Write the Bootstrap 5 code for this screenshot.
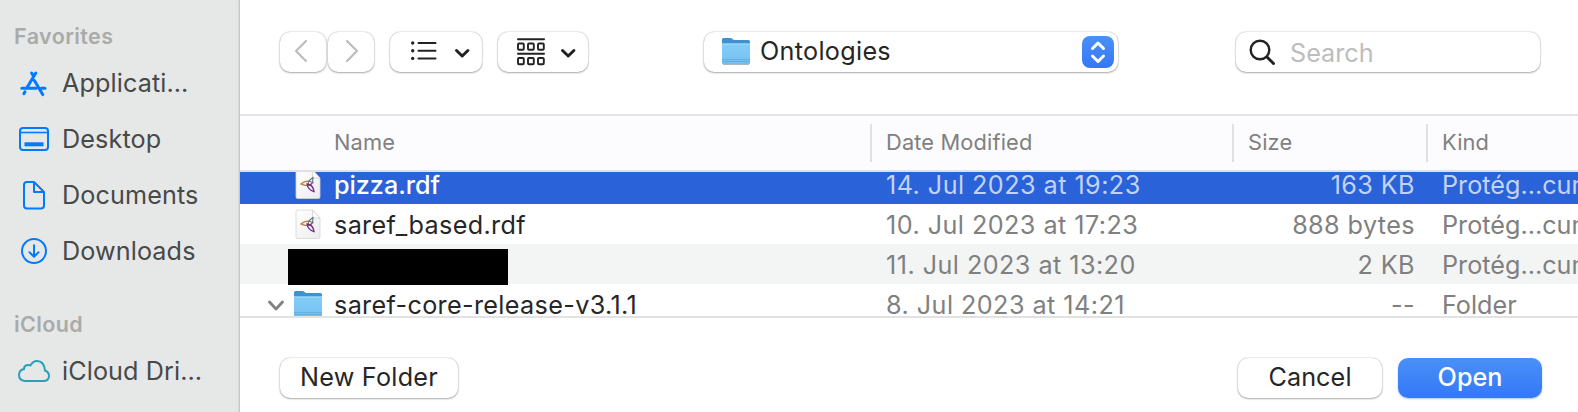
<!DOCTYPE html>
<html lang="en">
<head>
<meta charset="utf-8">
<title>Open</title>
<link href="https://cdn.jsdelivr.net/npm/bootstrap@5.3.0/dist/css/bootstrap.min.css" rel="stylesheet">
<style>
body{width:1578px;height:412px;overflow:hidden;background:#fff;font-family:Inter,"Liberation Sans",sans-serif;font-size:25.2px;color:#262626;line-height:1.2;white-space:nowrap}
.sidebar{width:240px;padding-top:17px;background:#e6e8e7;box-shadow:inset -1px 0 #c6c8c7,inset -2px 0 1px #d9dbda;color:#484949}
.side-title{height:38px;padding:1px 0 0 14px;font-size:21.5px;font-weight:600;color:#a9abaa;letter-spacing:.4px}
.side-title.second{margin-top:26px}
.side-item{height:56px;padding-left:16px;letter-spacing:.1px}
.side-item svg{width:36px;height:36px;margin-right:10px}
.toolbar{height:116px;border-bottom:2px solid #e4e4e4;padding:32px 38px 0 40px}
.ctl{height:40px;border-radius:10px;background:#fff;border:0;box-shadow:0 0 1.5px rgba(0,0,0,.35),0 1px 2px rgba(0,0,0,.28);color:#262626}
.navbtn{width:46px}
.navbtn+.navbtn{margin-left:2px}
.w-list{width:92px;margin-left:16px}
.w-grid{width:90px;margin-left:16px}
.w-path{width:414px;margin-left:116px;padding:0 4px 0 17px;letter-spacing:.3px}
.w-path>span:nth-child(2){margin:-2px 0 0 9px}
.w-search{width:304px;margin-left:118px;padding-left:12px;color:#bdbdbd}
.w-search span{margin:2px 0 0 12px}
.step{width:32px;height:32px;border-radius:8px;background:linear-gradient(#4a90f8,#3478f6)}
.cols{display:grid;grid-template-columns:630px 362px 194px 152px}
.heads{height:56px;background:#fcfcfe;border-bottom:2px solid #dfe0e2;font-size:21.8px;color:#808080;padding-bottom:2px;letter-spacing:.15px}
.heads>div{height:38px;display:flex;align-items:center;margin-top:1px}
.heads>div:first-child{padding-left:94px}
.heads>div+div{border-left:2px solid #e0e0e2;padding-left:14px}
.list{height:146px;overflow:hidden;border-bottom:2px solid #e2e2e2}
.list>.cols:first-child{margin-top:-8px}
.file{height:40px;padding-top:3px;align-items:center}
.file>div{display:flex;align-items:center;color:#808080}
.file>div:first-child{color:#262626;padding-left:26px;letter-spacing:.34px}
.file>div:nth-child(2),.file>div:nth-child(4){padding-left:16px}
.file>div:nth-child(2){letter-spacing:.45px}
.file>div:nth-child(3){justify-content:flex-end;padding-right:11px;letter-spacing:.4px}
.file.sel{background:#2962d9}
.file.sel>div{color:#c3d3f6}
.file.sel>div:first-child{color:#fff;font-weight:500;letter-spacing:-.05px}
.file.alt{background:#f3f5f5}
.twist{width:20px;margin-right:8px}
.ico{width:28px;height:32px;margin:-3px 12px 0 0}
.ico.dir{width:30px;margin:-1px 11px 0 -1px}
.redact{width:220px;height:36px;background:#000;margin:2px 0 -1px 22px}
.footer-bar{padding:40px 36px 0 40px}
.footer-bar .ctl{padding:0 0 2px}
.b-new{width:178px;letter-spacing:.25px}
.b-cancel{width:144px;letter-spacing:.1px}
.b-open.ctl{width:144px;background:linear-gradient(#4a90f8,#3478f6);color:#fff;font-weight:500;margin-left:16px;box-shadow:0 1px 2px rgba(52,120,246,.4)}
</style>
<script src="https://cdn.jsdelivr.net/npm/bootstrap@5.3.0/dist/js/bootstrap.bundle.min.js"></script>
</head>
<body class="d-flex">
<svg width="0" height="0" class="position-absolute">
<defs>
<linearGradient id="fg" x2="0" y2="1"><stop stop-color="#84cdf8"/><stop offset="1" stop-color="#74c0f0"/></linearGradient>
<linearGradient id="pg" x2="1" y2="1"><stop stop-color="#fff"/><stop offset="1" stop-color="#ececec"/></linearGradient>
<symbol id="folder" viewBox="0 0 30 32"><path d="M1 3.500q0-1.500 1.500-1.500h7q1 0 2 1t2 1H27.500q1.500 0 1.500 1.500V10H1z" fill="#3f92cd"/><path d="M1 7.500h28v19.500q0 1-1 1H2q-1 0-1-1z" fill="url(#fg)"/><path d="M1 8h28" stroke="#a3dcfb"/><path d="M1 23.500h28M1 25.500h28" stroke="#5ca9d9" stroke-width=".8"/><path d="M2 28.400h26" stroke="#8b9aa3" stroke-width=".8"/></symbol>
<symbol id="rdf" viewBox="0 0 28 32"><path d="M2 3.500q0-1.500 1.500-1.500H18.500l7.500 8v19q0 1.500-1.500 1.500h-21q-1.500 0-1.500-1.500z" fill="url(#pg)" stroke="#d4d4d4" stroke-width=".8"/><path d="M18.500 2v8H26z" fill="#fff" stroke="#cfcfcf" stroke-width=".8"/><g fill="none"><path d="M7 16q5.500-5 12-1.500q-4.500 5-12 1.500z" stroke="#b9783a" stroke-width="1.300"/><path d="M19 9.500q-6 3.500-4.500 8q4.500 0 4.500-8z" stroke="#4d718f" stroke-width="1.100"/><path d="M13 16q6 .5 7 7.500q-6-1.500-7-7.500z" stroke="#752e88" stroke-width="1.400"/></g></symbol>
</defs></svg>

<aside class="sidebar flex-shrink-0 h-100">
  <div class="side-title d-flex align-items-center">Favorites</div>
  <div class="side-item d-flex align-items-center"><svg viewBox="0 0 36 36" fill="none" stroke="#007aff" stroke-width="3" stroke-linecap="round"><path d="M15.600 8l1.800 3M19.800 8L10.600 23.200M5.800 23.200h14.200M18.400 15.600l8.300 14M25.300 23.200h3.700M9 26.800l-1.100 1.800"/></svg>Applicati…</div>
  <div class="side-item d-flex align-items-center"><svg viewBox="0 0 36 36" fill="none" stroke="#007aff" stroke-width="2"><rect x="4" y="7" width="28" height="22" rx="3"/><path d="M4 11.500h28" stroke-width="1.600"/><path d="M8.500 23.300h19" stroke-width="4"/></svg>Desktop</div>
  <div class="side-item d-flex align-items-center"><svg viewBox="0 0 36 36" fill="none" stroke="#007aff" stroke-width="2" stroke-linejoin="round"><path d="M18 5h-7q-3 0-3 3v20.500q0 3 3 3h14q3 0 3-3V15z"/><path d="M18 5v10H28"/></svg>Documents</div>
  <div class="side-item d-flex align-items-center"><svg viewBox="0 0 36 36" fill="none" stroke="#007aff" stroke-width="2" stroke-linecap="round" stroke-linejoin="round"><circle cx="18" cy="18" r="12"/><path d="M18 12.300v11.200M13.500 19.300l4.500 4.400l4.500-4.400"/></svg>Downloads</div>
  <div class="side-title second d-flex align-items-center">iCloud</div>
  <div class="side-item d-flex align-items-center"><svg viewBox="0 0 36 36" fill="none" stroke="#2b9fb8" stroke-width="2"><path d="M9 28q-6-.5-6-6 0-5 5-6 0-4 4.500-4 1.500 0 2 .3Q17 8 21 8q7 0 8 9.500 4 1.500 4 5.500 0 4.500-5 5z"/></svg>iCloud Dri…</div>
</aside>

<main class="flex-grow-1 d-flex flex-column">
  <div class="toolbar d-flex align-items-start">
    <button class="ctl navbtn p-0 d-flex"><svg width="46" height="40" fill="none" stroke="#bcbcbc" stroke-width="2.200" stroke-linecap="round" stroke-linejoin="round"><path d="M26 9L16 19l10 10"/></svg></button>
    <button class="ctl navbtn p-0 d-flex"><svg width="46" height="40" fill="none" stroke="#bcbcbc" stroke-width="2.200" stroke-linecap="round" stroke-linejoin="round"><path d="M19 9l10 10-10 10"/></svg></button>
    <button class="ctl w-list p-0 d-flex"><svg width="92" height="40" fill="none" stroke="#222" stroke-linecap="round" stroke-linejoin="round"><path d="M28.500 11h17M28.500 18.700h17M28.500 26.400h17" stroke-width="2"/><path d="M22.700 11h0M22.700 18.700h0M22.700 26.400h0" stroke-width="3.400"/><path d="M66.500 18.500l5.700 5.500 5.700-5.500" stroke-width="3"/></svg></button>
    <button class="ctl w-grid p-0 d-flex"><svg width="90" height="40" fill="none" stroke="#222" stroke-linecap="round" stroke-linejoin="round"><path d="M20 7.200h26M20 21.700h26" stroke-width="2"/><g stroke-width="1.900"><rect x="20" y="11.500" width="5.800" height="6.200" rx="1"/><rect x="30" y="11.500" width="5.800" height="6.200" rx="1"/><rect x="40" y="11.500" width="5.800" height="6.200" rx="1"/><rect x="20" y="26" width="5.800" height="6.200" rx="1"/><rect x="30" y="26" width="5.800" height="6.200" rx="1"/><rect x="40" y="26" width="5.800" height="6.200" rx="1"/></g><path d="M64.500 18.500l5.700 5.500 5.700-5.500" stroke-width="3"/></svg></button>
    <div class="ctl w-path d-flex align-items-center"><svg width="30" height="32"><use href="#folder"/></svg><span>Ontologies</span><span class="step ms-auto d-flex"><svg width="32" height="32" fill="none" stroke="#fff" stroke-width="3" stroke-linecap="round" stroke-linejoin="round"><path d="M10.500 12.500L16 7l5.500 5.500M10.500 20l5.500 5.500 5.500-5.500"/></svg></span></div>
    <div class="ctl w-search d-flex align-items-center"><svg width="30" height="30" fill="none" stroke="#222" stroke-width="2.400" stroke-linecap="round"><circle cx="12" cy="13" r="9.300"/><path d="M19 20l6.500 6.500" stroke-width="3"/></svg><span>Search</span></div>
  </div>

  <div class="heads cols align-items-center">
    <div>Name</div><div>Date Modified</div><div>Size</div><div>Kind</div>
  </div>

  <div class="list">
    <div class="file cols sel"><div><span class="twist"></span><svg class="ico"><use href="#rdf"/></svg>pizza.rdf</div><div>14. Jul 2023 at 19:23</div><div>163 KB</div><div>Protég…cument</div></div>
    <div class="file cols"><div><span class="twist"></span><svg class="ico"><use href="#rdf"/></svg>saref_based.rdf</div><div>10. Jul 2023 at 17:23</div><div>888 bytes</div><div>Protég…cument</div></div>
    <div class="file cols alt"><div><div class="redact"></div></div><div>11. Jul 2023 at 13:20</div><div>2 KB</div><div>Protég…cument</div></div>
    <div class="file cols"><div><svg class="twist" height="20" viewBox="0 0 20 20" fill="none" stroke="#808080" stroke-width="2.800" stroke-linecap="round" stroke-linejoin="round"><path d="M3.500 6l6.500 7 6.500-7"/></svg><svg class="ico dir"><use href="#folder"/></svg>saref-core-release-v3.1.1</div><div>8. Jul 2023 at 14:21</div><div>--</div><div>Folder</div></div>
  </div>

  <div class="footer-bar d-flex">
    <button class="ctl b-new">New Folder</button>
    <button class="ctl b-cancel ms-auto">Cancel</button>
    <button class="ctl b-open">Open</button>
  </div>
</main>
</body>
</html>
